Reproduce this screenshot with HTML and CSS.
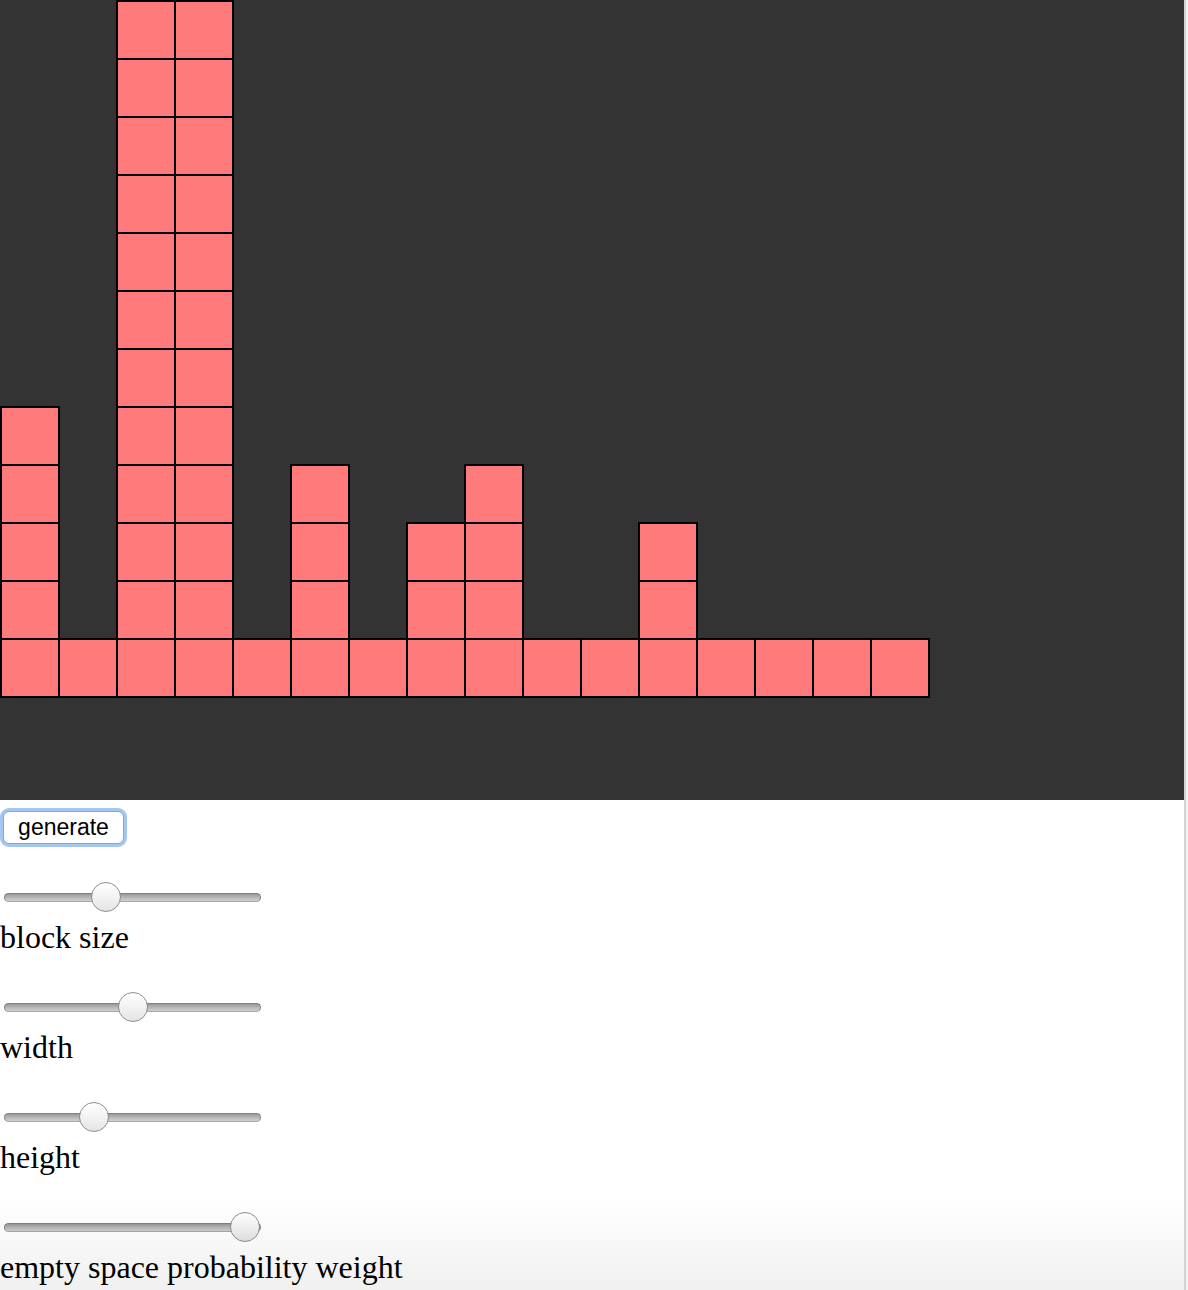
FILE: index.html
```html
<!DOCTYPE html>
<html>
<head>
<meta charset="utf-8">
<link rel="stylesheet" href="styles.css">
</head>
<body>
<div class="stage">
  <div class="bars">
    <div class="col"><div class="blk"></div><div class="blk"></div><div class="blk"></div><div class="blk"></div><div class="blk"></div></div>
    <div class="col"><div class="blk"></div></div>
    <div class="col"><div class="blk"></div><div class="blk"></div><div class="blk"></div><div class="blk"></div><div class="blk"></div><div class="blk"></div><div class="blk"></div><div class="blk"></div><div class="blk"></div><div class="blk"></div><div class="blk"></div><div class="blk"></div></div>
    <div class="col"><div class="blk"></div><div class="blk"></div><div class="blk"></div><div class="blk"></div><div class="blk"></div><div class="blk"></div><div class="blk"></div><div class="blk"></div><div class="blk"></div><div class="blk"></div><div class="blk"></div><div class="blk"></div></div>
    <div class="col"><div class="blk"></div></div>
    <div class="col"><div class="blk"></div><div class="blk"></div><div class="blk"></div><div class="blk"></div></div>
    <div class="col"><div class="blk"></div></div>
    <div class="col"><div class="blk"></div><div class="blk"></div><div class="blk"></div></div>
    <div class="col"><div class="blk"></div><div class="blk"></div><div class="blk"></div><div class="blk"></div></div>
    <div class="col"><div class="blk"></div></div>
    <div class="col"><div class="blk"></div></div>
    <div class="col"><div class="blk"></div><div class="blk"></div><div class="blk"></div></div>
    <div class="col"><div class="blk"></div></div>
    <div class="col"><div class="blk"></div></div>
    <div class="col"><div class="blk"></div></div>
    <div class="col"><div class="blk"></div></div>
  </div>
</div>
<div class="controls">
  <button class="gen">generate</button>
  <input class="range first" type="range" min="0" max="100" value="38">
  <div class="label">block size</div>
  <input class="range" type="range" min="0" max="100" value="50">
  <div class="label">width</div>
  <input class="range" type="range" min="0" max="100" value="33">
  <div class="label">height</div>
  <input class="range" type="range" min="0" max="100" value="100">
  <div class="label">empty space probability weight</div>
</div>
<div class="scrollstrip"></div>
<div class="fade"></div>
</body>
</html>
```
FILE: styles.css
```css
html, body {
  margin: 0;
  padding: 0;
  background: #ffffff;
}
body {
  font-family: "Liberation Serif", "Times New Roman", serif;
  color: #000;
}
.stage {
  width: 1184px;
  height: 800px;
  background: #333333;
  overflow: hidden;
}
.bars {
  display: flex;
  align-items: flex-end;
  height: 698px;
}
.col {
  width: 58px;
  display: flex;
  flex-direction: column;
}
.blk {
  box-sizing: border-box;
  width: 60px;
  height: 60px;
  border: 2px solid #000;
  background: #ff7b7b;
}
.blk + .blk {
  margin-top: -2px;
}
.controls {
  display: flex;
  flex-direction: column;
  align-items: flex-start;
}
.gen {
  margin: 11px 0 0 3px;
  width: 121px;
  height: 33px;
  box-sizing: border-box;
  background: #fff;
  border: 1px solid #76a8ec;
  border-radius: 6px;
  box-shadow: 0 0 0 3px #a3c6f3;
  font-family: "Liberation Sans", Arial, sans-serif;
  font-size: 23px;
  color: #000;
  padding: 0;
  line-height: 29px;
  outline: none;
}
.range {
  -webkit-appearance: none;
  appearance: none;
  width: 257px;
  height: 30px;
  margin: 37px 0 0 4px;
  padding: 0;
  background: transparent;
}
.range.first {
  margin-top: 38px;
}
.range::-webkit-slider-runnable-track {
  height: 9px;
  box-sizing: border-box;
  border-radius: 5px;
  border: 1px solid #808080;
  border-bottom-color: #a8a8a8;
  background: linear-gradient(#9a9a9a, #bdbdbd 60%, #cfcfcf);
}
.range::-webkit-slider-thumb {
  -webkit-appearance: none;
  appearance: none;
  width: 30px;
  height: 30px;
  box-sizing: border-box;
  border-radius: 50%;
  border: 1.5px solid #8f8f8f;
  background: linear-gradient(#ffffff, #f3f3f3 50%, #e4e4e4);
  margin-top: -11.5px;
}
.label {
  margin-top: 7px;
  font-size: 32px;
  line-height: 36px;
  height: 36px;
  white-space: nowrap;
}
.scrollstrip {
  position: fixed;
  top: 0;
  right: 0;
  bottom: 0;
  width: 2px;
  border-left: 2px solid #d2d2d2;
  background: #f3f3f3;
}
.fade {
  position: fixed;
  left: 0;
  right: 4px;
  bottom: 0;
  height: 90px;
  background: linear-gradient(rgba(0,0,0,0), rgba(0,0,0,0.06));
  pointer-events: none;
}
```
